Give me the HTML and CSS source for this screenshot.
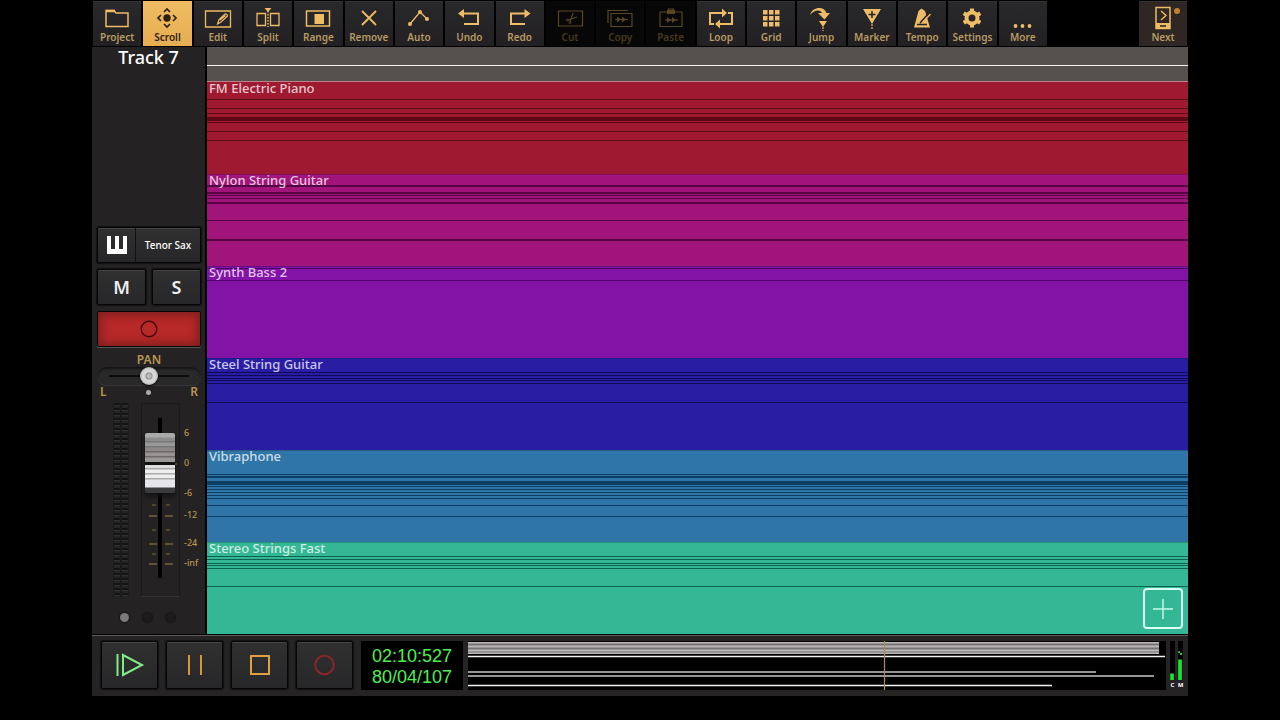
FILE: index.html
```html
<!DOCTYPE html>
<html lang="en">
<head>
<meta charset="utf-8">
<title>Track 7</title>
<link rel="stylesheet" href="styles.css">
</head>
<body>
<main class="app">
  <nav class="toolbar" aria-label="Tools">
    <div class="tools">
      <button class="tool"><svg viewBox="0 0 26 24"><path d="M2 20.500V4.500h8l2 2.500h12v13.500z"/><path d="M2 5h9" stroke-width="2.500"/></svg>Project</button>
      <button class="tool active"><svg viewBox="0 0 26 24"><circle class="solid" cx="13" cy="12" r="3.700"/><path d="M10 6l3-3 3 3M10 18l3 3 3-3M7 9l-3 3 3 3M19 9l3 3-3 3" stroke-width="1.700"/></svg>Scroll</button>
      <button class="tool"><svg viewBox="0 0 26 24"><path d="M.500 5h25v16H.500z" stroke-width="1.300"/><path d="M12.500 18l1.500-4.500 6-5.500q2-.500 2.500 2l-6.500 6zM15 14l5.500-4.500" stroke-width="1.200"/></svg>Edit</button>
      <button class="tool"><svg viewBox="0 0 26 24"><path d="M10.500 19.500H2v-12h8.500zM15.500 19.500H24v-12h-8.500z" stroke-width="1.300"/><path class="solid" d="M9.500 2h7L13 6z"/><path d="M13 5v16" stroke-dasharray="1.500 1.500" stroke-width="1.500"/></svg>Split</button>
      <button class="tool"><svg viewBox="0 0 26 24"><path d="M1.500 5h23v15h-23z"/><path class="solid" d="M9.500 8H19v10H9.500z"/></svg>Range</button>
      <button class="tool"><svg viewBox="0 0 26 24"><path d="M6 5l14 14M20 5L6 19" stroke-width="1.800"/></svg>Remove</button>
      <button class="tool"><svg viewBox="0 0 26 24"><path d="M4 18L14 6l7 7" stroke-width="1.300"/><circle class="solid" cx="4" cy="18" r="2"/><circle class="solid" cx="14" cy="6" r="2"/><circle class="solid" cx="21" cy="13" r="2"/></svg>Auto</button>
      <button class="tool"><svg viewBox="0 0 26 24"><path d="M7 7.500h15v10.500H8" stroke-width="2"/><path class="solid" d="M2 7.500L8 3v9z"/></svg>Undo</button>
      <button class="tool"><svg viewBox="0 0 26 24"><path d="M19 7.500H4v10.500h14" stroke-width="2"/><path class="solid" d="M23.500 7.500l-6-4.500v9z"/></svg>Redo</button>
      <button class="tool" disabled><svg viewBox="0 0 26 24"><path d="M1.500 5h24v15h-24z" stroke-width="1.200"/><path d="M16 7l-3 9M20 11l-9 3" stroke-width="1.200"/><circle cx="10.500" cy="14" r="1" stroke-width="1"/><circle cx="13" cy="16.500" r="1" stroke-width="1"/></svg>Cut</button>
      <button class="tool" disabled><svg viewBox="0 0 26 24"><path d="M4 7.500h21v13H4zM1 17V4.500h20" stroke-width="1.200"/><path d="M8 13.500h13" stroke-width="1.200"/><path class="solid" d="M10 10.500l4 3-4 3zM15 10.500l4 3-4 3z"/></svg>Copy</button>
      <button class="tool" disabled><svg viewBox="0 0 26 24"><path d="M2 6h22v14.500H2zM10.500 5V3h5v2" stroke-width="1.200"/><path class="solid" d="M9 4h8v4H9z"/><path d="M7 14h13" stroke-width="1.200"/><path class="solid" d="M9 11l4 3-4 3zM14 11l4 3-4 3z"/></svg>Paste</button>
      <button class="tool"><svg viewBox="0 0 26 24"><path d="M8.500 18H24V7h-4M17.500 7H2v11h4" stroke-width="2"/><path class="solid" d="M14 2.500l5 4.500-5 4.500zM12 13.500L7 18l5 4.500z"/></svg>Loop</button>
      <button class="tool"><svg viewBox="0 0 26 24"><path class="solid" d="M5 4h4.500v4.500H5zM11 4h4.500v4.500H11zM17 4h4.500v4.500H17zM5 10h4.500v4.500H5zM11 10h4.500v4.500H11zM17 10h4.500v4.500H17zM5 16h4.500v4.500H5zM11 16h4.500v4.500H11zM17 16h4.500v4.500H17z"/></svg>Grid</button>
      <button class="tool"><svg viewBox="0 0 26 24"><path class="solid" d="M1 9C3 1 15-1 17.500 7H21l-5.500 6.500L9 7h4C11 3 5 4 1 9zM10 15h8l-4 6z"/><path d="M14 21v4" stroke-width="1.200" stroke-dasharray="2 1"/></svg>Jump</button>
      <button class="tool"><svg viewBox="0 0 26 24"><path class="solid" d="M4 3h18l-9 15z"/><path class="cut" d="M13 5v7M9.500 8.500h7"/><path d="M13 18v5" stroke-width="1.200" stroke-dasharray="2 1"/></svg>Marker</button>
      <button class="tool"><svg viewBox="0 0 26 24"><path class="solid" d="M5 21.500L9.500 5l3-2.500L16 5l5 16.500z"/><path class="cut" d="M11 17L20 7M8 18.500h10" stroke-width="1.200"/><path d="M14 16L21.500 8" stroke-width="1.300"/></svg>Tempo</button>
      <button class="tool"><svg viewBox="0 0 26 24"><circle cx="13" cy="12" r="5.500" stroke-width="4"/><path d="M13 2.500v4M13 17.500v4M4.700 7.200l3.500 2M17.800 14.800l3.500 2M4.700 16.800l3.500-2M17.800 9.200l3.500-2" stroke-width="4"/></svg>Settings</button>
      <button class="tool"><svg viewBox="0 0 26 24"><circle class="solid" cx="5.500" cy="20" r="1.900"/><circle class="solid" cx="12.500" cy="20" r="1.900"/><circle class="solid" cx="19.500" cy="20" r="1.900"/></svg>More</button>
    </div>
    <button class="tool next"><svg viewBox="0 0 26 24"><path d="M6 1.500h14v21H6z" stroke-width="1.500"/><path class="solid" d="M6 17h14v6H6z"/><path d="M11 5l5 4.500-5 4.500" stroke-width="1.400"/><path class="cut" d="M10 20h6"/></svg>Next<span class="badge"></span></button>
  </nav>

  <div class="workspace">
    <aside class="channel">
      <h1 class="channel-name">Track 7</h1>
      <div class="controls">
        <button class="key instrument"><span class="piano"><svg viewBox="0 0 22 18"><path fill="#fff" d="M1 0h4v13h4V0h4v13h4V0h4v18H1z"/></svg></span><span class="instrument-name">Tenor Sax</span></button>
        <div class="pair"><button class="key letter">M</button><button class="key letter">S</button></div>
        <button class="key arm" aria-label="Arm recording"><svg viewBox="0 0 18 18"><circle cx="9" cy="9" r="7.800" fill="none" stroke="#45080c" stroke-width="1.400"/></svg></button>
        <div class="pan">
          <label for="pan">PAN</label>
          <input id="pan" type="range" min="-50" max="50" value="0">
          <div class="pan-ends"><span>L</span><i class="center-dot"></i><span>R</span></div>
        </div>
        <div class="levels">
          <div class="vu"><i></i><i></i></div>
          <div class="fader">
            <svg class="ticks" viewBox="0 0 38 194"><path d="M7 112h8M23 112h8M7 140h8M23 140h8M7 160h8M23 160h8M4 60h31" stroke="#a08446" stroke-width="1.200"/><path d="M10 101h4M24 101h4M10 126h4M24 126h4M10 150h4M24 150h4" stroke="#7e693b" stroke-width="1.200"/></svg>
            <input type="range" min="0" max="100" value="85" aria-label="Volume">
          </div>
          <svg class="scale" viewBox="0 0 21 194"><text x="4" y="33">6</text><text x="4" y="63">0</text><text x="4" y="93">-6</text><text x="4" y="115">-12</text><text x="4" y="143">-24</text><text x="4" y="163">-inf</text></svg>
        </div>
        <div class="pages"><i class="on"></i><i></i><i></i></div>
      </div>
    </aside>

    <section class="arrange">
      <div class="ruler"><div></div><div></div></div>
      <div class="track red"><span>FM Electric Piano</span><svg><rect y="17" height="1"/><rect y="26" height="1"/><rect y="31" height="1"/><rect y="35" height="4"/><rect y="40" height="1"/><rect y="49" height="1"/><rect y="58" height="1"/></svg></div>
      <div class="track magenta"><span>Nylon String Guitar</span><svg><rect y="11" height="2"/><rect y="18" height="2"/><rect y="21" height="1"/><rect y="24" height="1"/><rect y="28" height="2"/><rect y="46" height="1"/><rect y="65" height="2"/></svg></div>
      <div class="track purple"><span>Synth Bass 2</span><svg><rect y="2" height="1"/><rect y="14" height="1"/></svg></div>
      <div class="track indigo"><span>Steel String Guitar</span><svg><rect y="14" height="1"/><rect y="17" height="1"/><rect y="20" height="1"/><rect y="22" height="1"/><rect y="25" height="1"/><rect y="44" height="1"/></svg></div>
      <div class="track blue"><span>Vibraphone</span><svg><rect y="24" height="1"/><rect y="26" height="2"/><rect y="31" height="4"/><rect y="36" height="1"/><rect y="39" height="1"/><rect y="42" height="1"/><rect y="45" height="1"/><rect y="48" height="1"/><rect y="55" height="1"/><rect y="66" height="1"/></svg></div>
      <div class="track green"><span>Stereo Strings Fast</span><svg><rect y="14" height="1"/><rect y="17" height="1"/><rect y="21" height="1"/><rect y="23" height="1"/><rect y="26" height="1"/><rect y="44" height="1"/></svg></div>
      <button class="add" aria-label="Add track"><svg viewBox="0 0 20 20"><path d="M10 0v20M0 10h20" stroke="#c9fbee" stroke-width="1.400"/></svg></button>
    </section>
  </div>

  <footer class="transport">
    <button class="key move" aria-label="Play"><svg viewBox="0 0 30 26" stroke="#7fec86"><path d="M2.500 2v22M8 3v20l19-10z"/></svg></button>
    <button class="key move" aria-label="Pause"><svg viewBox="0 0 30 26" stroke="#d9952f"><path d="M9 3v20M21 3v20"/></svg></button>
    <button class="key move" aria-label="Stop"><svg viewBox="0 0 30 26" stroke="#e0a040"><path d="M6 4h18v18H6z"/></svg></button>
    <button class="key move" aria-label="Record"><svg viewBox="0 0 30 26" stroke="#8c2529"><circle cx="14.500" cy="13" r="9.300"/></svg></button>
    <output class="clock"><span>02:10:527</span><span>80/04/107</span></output>
    <div class="overview">
      <svg viewBox="0 0 698 49" preserveAspectRatio="none"><path fill="#989496" d="M0 1h691v12H0z"/><path stroke="#bdb9bb" d="M0 1.500h691M0 5.500h691M0 9.500h691M0 12.500h691"/><path stroke="#767375" d="M0 3.500h691M0 7.500h691"/><path stroke="#f2f2f2" stroke-width="1.300" d="M0 15.500h697M0 44.500h584"/><path stroke="#c6c6c6" stroke-width="1.500" d="M0 31h628M0 35h686"/><path stroke="#a68c55" stroke-width="1.300" d="M416.500 0v49"/></svg>
    </div>
    <div class="meters">
      <div><svg viewBox="0 0 5 42"><path fill="#000" d="M0 0h5v42H0z"/><path fill="#16e52a" d="M0 35h4v7H0z"/></svg><span>C</span></div>
      <div><svg viewBox="0 0 5 42"><path fill="#000" d="M0 0h5v42H0z"/><path fill="#16e52a" d="M0 20h4v22H0zM0 11h2v2H0zM2 13h2v2H2z"/></svg><span>M</span></div>
    </div>
  </footer>
</main>
</body>
</html>
```
FILE: styles.css
```css
* { box-sizing: border-box; }
body {
  margin: 0;
  background: #000;
  color: #fff;
  font-family: "Noto Sans", "Open Sans", sans-serif;
}
button {
  margin: 0;
  padding: 0;
  border: 0;
  color: inherit;
  font: inherit;
}
svg { display: block; fill: none; }
i { display: block; }

.app {
  display: flex;
  flex-direction: column;
  width: calc(100% - 184px);
  min-height: calc(100vh - 24px);
  margin: 0 auto;
}

/* Toolbar */
.toolbar { display: flex; padding-bottom: 1px; }
.tools { display: flex; flex: 1; }
.tool {
  position: relative;
  display: flex;
  flex: 1;
  flex-direction: column;
  align-items: center;
  height: 46px;
  padding-top: 5px;
  border: 1px solid #000;
  border-bottom-width: 0;
  background: linear-gradient(#29282a, #222022);
  box-shadow: inset 0 1px #343234;
  color: #b89a62;
  font-size: 10px;
  font-weight: 600;
  line-height: 14px;
}
.tool svg {
  width: 26px;
  height: 24px;
  stroke: #eebb66;
  stroke-width: 1.5;
  overflow: visible;
}
.tool .solid { fill: #eebb66; stroke: none; }
.tool .cut { stroke: #242224; stroke-width: 1.5; }
.tool.active {
  background: linear-gradient(#f0bd62, #e6ad52);
  box-shadow: none;
  color: #2c2010;
}
.tool.active svg { stroke: #2c2010; }
.tool.active .solid { fill: #2c2010; }
.tool:disabled { background: #080708; box-shadow: none; color: #47391f; }
.tool:disabled svg { stroke: #574725; }
.tool:disabled .solid { fill: #574725; }
.tool.next { flex: none; width: 50px; margin-left: 90px; background: #2e2723; }
.badge {
  position: absolute;
  top: 7px;
  right: 7px;
  width: 6px;
  height: 6px;
  border-radius: 50%;
  background: #c47f2c;
}

/* Channel strip */
.workspace { display: flex; flex: 1; }
.channel {
  display: flex;
  flex: none;
  flex-direction: column;
  width: 115px;
  border-right: 2px solid #000;
  background: #242223;
}
.channel-name {
  margin: 0;
  font-size: 18px;
  font-weight: 500;
  line-height: 20px;
  text-align: center;
}
.controls {
  display: flex;
  flex-direction: column;
  gap: 6px;
  margin-top: auto;
  padding: 0 4px 12px 5px;
}
.key {
  border: 1px solid #060606;
  border-radius: 2px;
  background: linear-gradient(#303031, #272628);
  box-shadow: inset 0 1px #444345, 0 0 1px 1px #111;
}
.instrument { display: flex; align-items: center; height: 36px; }
.piano {
  display: flex;
  align-items: center;
  align-self: stretch;
  justify-content: center;
  width: 38px;
  border-right: 1px solid #111;
}
.piano svg { width: 22px; height: 18px; }
.instrument-name { flex: 1; font-size: 10px; font-weight: 500; }
.pair { display: flex; gap: 6px; }
.letter { flex: 1; height: 36px; color: #eee; font-size: 18px; font-weight: 600; }
.arm {
  display: flex;
  align-items: center;
  justify-content: center;
  height: 36px;
  background: #b72828;
  box-shadow: inset 0 0 8px 3px #7d1f1f, 0 1px #555;
}
.arm svg { width: 18px; height: 18px; }
.pan { margin-bottom: -2px; color: #b89550; font-size: 12px; font-weight: 600; line-height: 14px; }
.pan label { display: block; text-align: center; }
.pan input {
  display: block;
  width: 100%;
  height: 18px;
  margin: 0;
  border-radius: 9px;
  background: linear-gradient(#0c0c0c, #0c0c0c) center / 80px 2px no-repeat, #2a292a;
  box-shadow: inset 0 2px 2px #151415, 0 1px #383638;
  appearance: none;
}
.pan input::-webkit-slider-thumb {
  width: 18px;
  height: 18px;
  border: 0;
  border-radius: 50%;
  background: radial-gradient(circle, #bbb 0 2px, #888 3px, #d6d6d6 4px 7px, #aaa 9px);
  box-shadow: 0 1px 2px #000;
  appearance: none;
}
.pan-ends { display: flex; align-items: center; justify-content: space-between; padding: 0 3px; }
.center-dot { width: 5px; height: 5px; border-radius: 50%; background: #aaa; }
.levels { display: flex; justify-content: flex-end; height: 194px; }
.vu {
  display: flex;
  gap: 2px;
  margin-right: 12px;
  padding: 0 1px;
  background: #1c1b1c;
}
.vu i {
  width: 6px;
  background: repeating-linear-gradient(#151415 0 2px, #303030 2px 3px, #252425 3px 5px);
}
.fader {
  position: relative;
  width: 39px;
  border: 1px solid #1b1a1b;
  border-bottom-color: #343234;
}
.ticks { width: 38px; height: 194px; }
.fader input {
  position: absolute;
  inset: 14px 0 18px 2px;
  width: 32px;
  height: 160px;
  margin: 0;
  background: linear-gradient(#000, #000) center / 4px 100% no-repeat;
  writing-mode: vertical-lr;
  direction: rtl;
  appearance: none;
}
.fader input::-webkit-slider-thumb {
  width: 30px;
  height: 60px;
  border: 0;
  border-radius: 2px;
  background: linear-gradient(#aaa 0 4px, #8f8c8c 5px 8px, #777 8px 9px, #999 10px 13px, #777 13px 14px, #8d8989 15px 18px, #6c6969 18px 19px, #989494 20px 23px, #6d6969 23px 24px, #9c9797 25px 29px, #111 29px 32px, #ddd 32px 35px, #aaa 35px 36px, #eee 37px 40px, #aaa 40px 41px, #eee 42px 45px, #aaa 45px 46px, #e5e5ea 47px 54px, #3b3b3d 55px 60px);
  box-shadow: 0 3px 4px #111;
  appearance: none;
}
.scale { width: 21px; height: 194px; overflow: visible; fill: #b89550; font-size: 9px; font-weight: 500; }
.pages { display: flex; gap: 14px; margin-top: 10px; padding-left: 23px; }
.pages i { width: 9px; height: 9px; border-radius: 50%; background: #1d1c1d; box-shadow: 0 0 1px 1px #171617; }
.pages .on { background: #7b797b; }

/* Arrangement */
.arrange { position: relative; display: flex; flex: 1; flex-direction: column; }
.ruler { display: flex; flex-direction: column; height: 35px; padding-top: 1px; border-bottom: 1px solid #bd8289; background: #56514e; }
.ruler div:first-child { height: 18px; border-bottom: 1px solid #f4f4f4; }
.track { position: relative; flex: 1; min-height: 92px; }
.track span {
  position: absolute;
  top: 0;
  left: 2px;
  color: #ffffffc4;
  font-size: 13px;
  font-weight: 550;
  line-height: 13px;
}
.track svg { width: 100%; height: 92px; fill: inherit; }
.track rect { width: 100%; fill: inherit; }
.red { background: #9f1a31; fill: #5f0614; }
.magenta { background: #a11479; fill: #560443; }
.purple { background: #8313a6; fill: #4c0666; }
.indigo { background: #291da4; fill: #100b58; }
.blue { background: #2f75a7; fill: #0e3d64; }
.green { background: #34b795; fill: #0c6450; }
.track + .track { box-shadow: inset 0 1px #00000033; }
.add {
  position: absolute;
  right: 5px;
  bottom: 5px;
  display: flex;
  align-items: center;
  justify-content: center;
  width: 40px;
  height: 41px;
  border: 2px solid #d9fff5;
  border-radius: 4px;
  background: transparent;
}
.add svg { width: 20px; height: 20px; }

/* Transport */
.transport {
  display: flex;
  gap: 8px;
  height: 62px;
  padding: 6px 5px 6px 9px;
  border-top: 1px solid #000;
  background: #262324;
  box-shadow: inset 0 1px #5c5a5b;
}
.move { display: flex; align-items: center; justify-content: center; width: 57px; height: 48px; }
.move svg { width: 30px; height: 26px; stroke-width: 2; }
.clock {
  display: flex;
  flex-direction: column;
  align-items: center;
  justify-content: center;
  width: 102px;
  height: 49px;
  padding-top: 3px;
  background: #000;
  color: #4df052;
  font: 18px/21px "Liberation Sans", Arial, sans-serif;
}
.overview { flex: 1; height: 49px; margin-left: -3px; background: #000; }
.overview svg { width: 100%; height: 49px; }
.meters { display: flex; gap: 3px; margin-left: -4px; }
.meters div { display: flex; flex-direction: column; align-items: center; width: 5px; }
.meters svg { width: 5px; height: 42px; }
.meters span { font-size: 6px; font-weight: 700; line-height: 10px; }
```
